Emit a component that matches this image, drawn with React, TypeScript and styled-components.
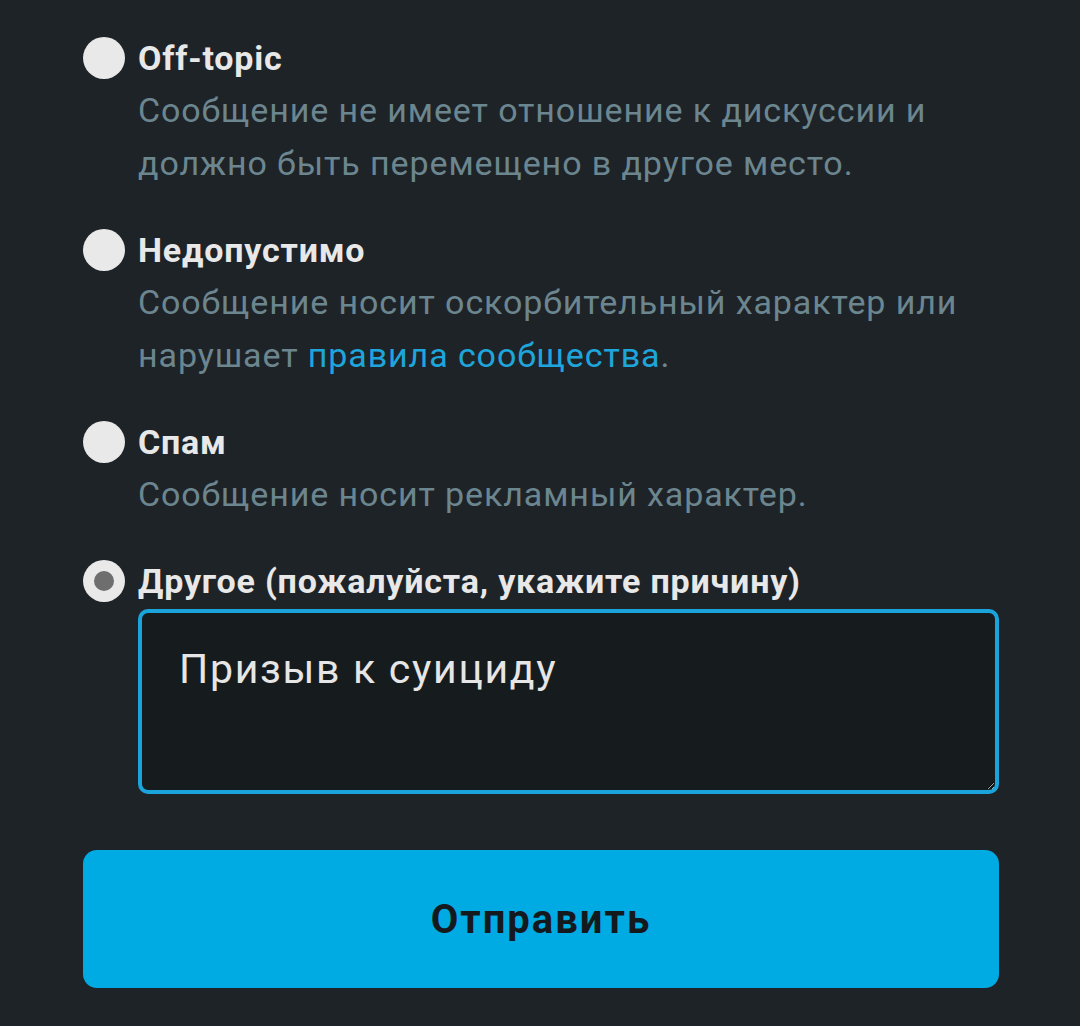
import * as React from "react";
import styled, { createGlobalStyle } from "styled-components";

const GlobalStyle = createGlobalStyle`
  html, body {
    margin: 0;
    padding: 0;
    background: #1e2327;
  }
  body {
    font-family: Roboto, "Noto Sans", sans-serif;
  }
`;

const Page = styled.div`
  width: 1080px;
  height: 1026px;
  box-sizing: border-box;
  padding: 32px 81px 0 83px;
  background: #1e2327;
  overflow: hidden;
`;

const Options = styled.div`
  display: flex;
  flex-direction: column;
  gap: 34px;
`;

const Option = styled.label`
  display: grid;
  grid-template-columns: 42px 1fr;
  column-gap: 13px;
  cursor: pointer;
`;

const Radio = styled.span<{ checked?: boolean }>`
  width: 42px;
  height: 42px;
  margin-top: 5px;
  border-radius: 50%;
  background: #e9e9e9;
  display: flex;
  align-items: center;
  justify-content: center;
  &::after {
    content: "";
    width: 20px;
    height: 20px;
    border-radius: 50%;
    background: ${({ checked }) => (checked ? "#6e6e6e" : "transparent")};
  }
`;

const Title = styled.div`
  font-size: 34px;
  font-weight: 700;
  line-height: 52px;
  letter-spacing: 0.8px;
  color: #e8e8e8;
  white-space: nowrap;
`;

const Description = styled.div`
  grid-column: 2;
  font-size: 34px;
  line-height: 53px;
  color: #6c8690;
  letter-spacing: 0.9px;
  white-space: nowrap;
`;

const Link = styled.a`
  color: #1ea6dc;
  text-decoration: none;
`;

const Reason = styled.textarea`
  grid-column: 2;
  margin-top: 2px;
  height: 185px;
  box-sizing: border-box;
  border: 4px solid #1ba4dc;
  border-radius: 10px;
  background: #161b1e;
  color: #e6e6e6;
  font-family: Roboto, sans-serif;
  font-size: 41px;
  letter-spacing: 1.7px;
  padding: 32px 37px 10px;
  resize: vertical;
  outline: none;
`;

const SubmitButton = styled.button`
  display: block;
  width: 916px;
  height: 138px;
  margin-top: 56px;
  border: none;
  border-radius: 14px;
  background: #00abe3;
  color: #14191d;
  font-family: Roboto, sans-serif;
  font-size: 40px;
  font-weight: 700;
  letter-spacing: 2px;
  cursor: pointer;
`;

type Reason = {
  id: string;
  title: string;
  text: React.ReactNode;
};

const reasons: Reason[] = [
  {
    id: "offtopic",
    title: "Off-topic",
    text: (
      <>
        Сообщение не имеет отношение к дискуссии и
        <br />
        должно быть перемещено в другое место.
      </>
    ),
  },
  {
    id: "inappropriate",
    title: "Недопустимо",
    text: (
      <>
        Сообщение носит оскорбительный характер или
        <br />
        нарушает <Link href="#">правила сообщества</Link>.
      </>
    ),
  },
  {
    id: "spam",
    title: "Спам",
    text: <>Сообщение носит рекламный характер.</>,
  },
];

export default function App() {
  const [selected, setSelected] = React.useState("other");
  const [note, setNote] = React.useState("Призыв к суициду");

  return (
    <Page>
      <GlobalStyle />
      <Options>
        {reasons.map(r => (
          <Option key={r.id} onClick={() => setSelected(r.id)}>
            <Radio checked={selected === r.id} />
            <Title>{r.title}</Title>
            <Description>{r.text}</Description>
          </Option>
        ))}
        <Option onClick={() => setSelected("other")}>
          <Radio checked={selected === "other"} />
          <Title>Другое (пожалуйста, укажите причину)</Title>
          <Reason value={note} onChange={e => setNote(e.target.value)} />
        </Option>
      </Options>
      <SubmitButton>Отправить</SubmitButton>
    </Page>
  );
}
